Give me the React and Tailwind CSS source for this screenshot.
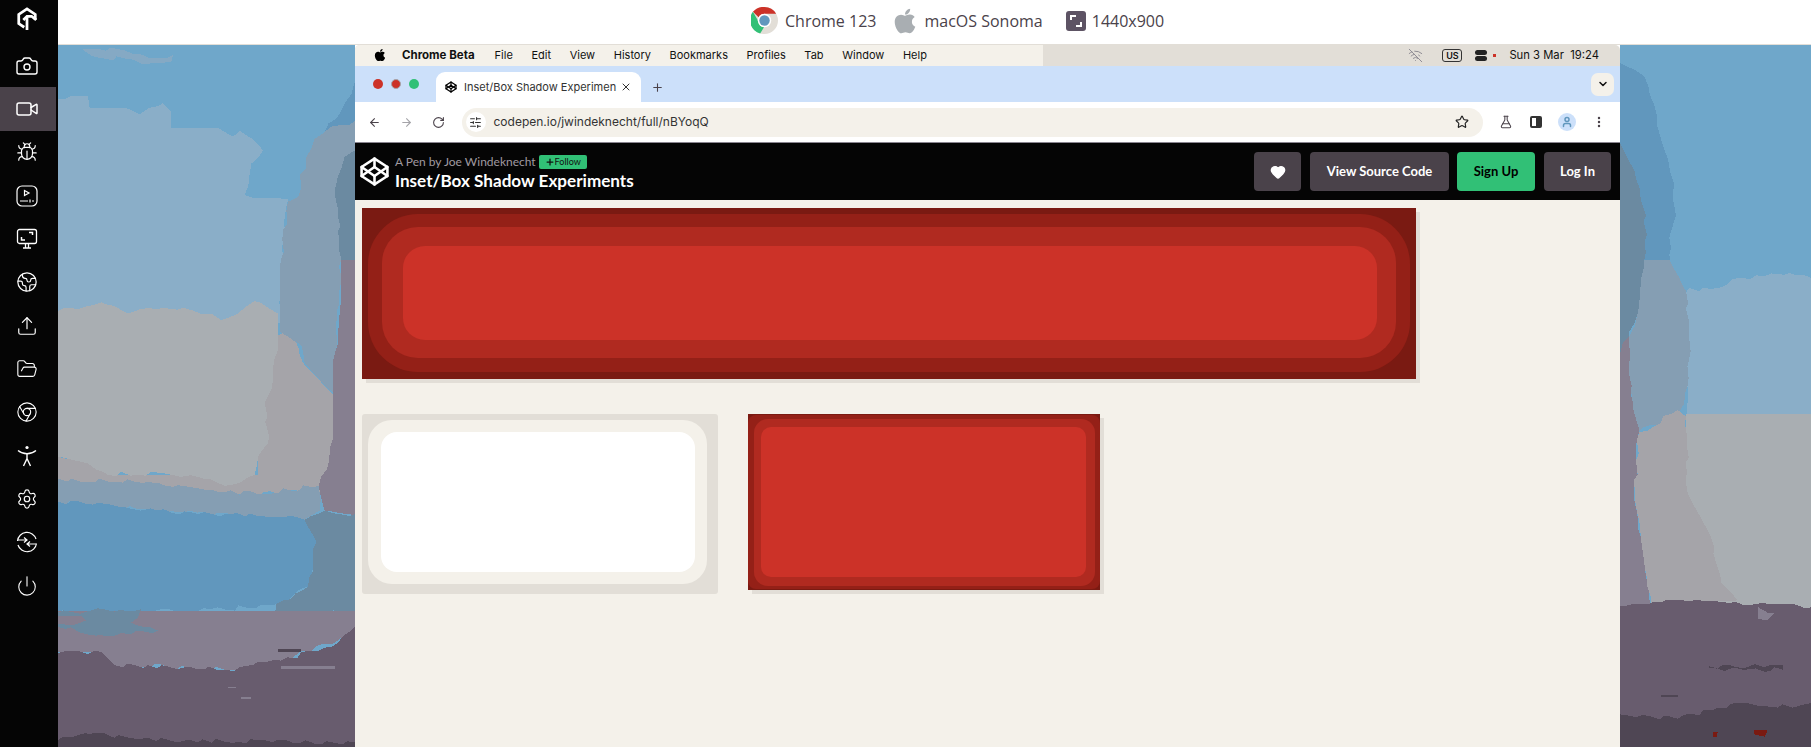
import React from 'react';
import {
  Camera, Video, Bug, Earth, Upload, FolderOpen, Chrome, Settings, Power,
  Codepen, ArrowLeft, ArrowRight, RotateCw, Star, FlaskConical, User, EllipsisVertical,
  ChevronDown, Plus, X, Heart, WifiOff, SlidersHorizontal,
} from 'lucide-react';
import { FaApple } from 'react-icons/fa';

// wallpaper shapes, coordinates are in the panel's own viewBox
const LEFT_WALLPAPER = [
  ['#6fa7ca', '0,0 891,0 891,1568 0,1568'],
  ['#85a9c4', '70,8 120,8 200,12 275,30 345,22 340,38 270,42 200,30 120,28 100,24'],
  ['#8aaec8', '0,120 90,115 95,140 200,140 245,155 275,140 315,130 340,150 340,185 480,185 525,205 545,192 585,210 615,235 580,265 560,335 690,345 680,420 665,620 0,620'],
  ['#6197bd', '891,80 860,130 800,195 891,180'],
  ['#a5a4a9', '600,660 700,635 735,710 825,780 825,940 800,995 500,1005 150,985 0,975 0,920 90,930 150,960 600,960'],
  ['#a9aeb2', '0,595 60,590 130,575 210,600 300,590 400,592 450,600 490,615 540,600 590,572 660,600 660,640 650,700 640,770 620,800 630,890 600,920 590,960 500,985 420,965 300,955 150,960 90,935 0,920'],
  ['#859eb3', '770,210 800,195 891,170 891,480 850,480 830,780 800,760 740,710 730,670 665,640 665,500 690,350 720,340 745,250'],
  ['#6b8aa1', '891,235 860,250 832,320 850,480 891,480'],
  ['#867f90', '850,480 891,480 891,1050 800,1040 782,985 805,950 825,880 825,705 840,640 850,570'],
  ['#859eb3', '0,968 150,975 300,978 420,990 600,1003 782,985 785,1040 740,1060 600,1055 300,1040 0,1022'],
  ['#6197bd', '0,1020 120,1022 300,1040 600,1052 740,1060 780,1110 750,1210 650,1250 400,1265 0,1268'],
  ['#6b8aa1', '740,1060 800,1040 891,1048 891,1265 650,1275 655,1248 750,1210 775,1110'],
  ['#867f90', '0,1265 891,1265 891,1310 840,1330 670,1375 500,1395 170,1385 130,1355 0,1355'],
  ['#6b8aa1', '0,1268 250,1260 220,1290 300,1308 150,1320 0,1300'],
  ['#867f90', '0,1275 70,1275 85,1285 50,1295 0,1292'],
  ['#685c6e', '0,1358 130,1355 170,1385 500,1395 670,1375 840,1335 891,1300 891,1568 0,1568'],
  ['#867f90', '510,1433 535,1433 535,1437 510,1437'],
  ['#867f90', '550,1456 580,1456 580,1460 550,1460'],
  ['#867f90', '670,1388 830,1388 830,1394 670,1394'],
  ['#4f4654', '660,1350 730,1350 730,1355 660,1355'],
  ['#4f4654', '0,1552 100,1538 250,1550 500,1556 891,1558 891,1568 0,1568'],
];

const RIGHT_WALLPAPER = [
  ['#6fa7ca', '27,0 600,0 600,1568 27,1568'],
  ['#6197bd', '27,40 100,70 130,135 150,210 190,310 195,380 175,430 180,510 200,552 100,520 27,520'],
  ['#6b8aa1', '27,220 70,280 105,380 100,480 100,540 80,600 55,640 55,720 27,720'],
  ['#8aaec8', '200,550 300,545 390,520 480,510 600,520 600,835 230,830 225,650'],
  ['#859eb3', '100,480 175,480 225,550 235,700 220,800 200,825 80,865 55,760 55,650 80,600'],
  ['#867f90', '27,690 55,650 60,780 85,860 70,1000 95,1130 120,1255 27,1255'],
  ['#a9aeb2', '225,825 400,825 600,825 600,1265 380,1250 225,1250'],
  ['#a5a4a9', '85,865 200,815 225,830 230,1000 300,1100 330,1200 380,1240 120,1250 95,1130 72,1000'],
  ['#685c6e', '27,1252 150,1245 250,1240 600,1256 600,1568 27,1568'],
  ['#867f90', '440,1255 490,1270 470,1285 440,1282'],
  ['#4f4654', '295,1388 515,1385 515,1395 295,1392'],
  ['#4f4654', '150,1452 200,1452 200,1456 150,1456'],
  ['#4f4654', '27,1495 120,1500 200,1505 320,1480 410,1470 500,1480 600,1470 600,1568 27,1568'],
  ['#7a1a12', '430,1530 470,1530 462,1545 430,1540'],
  ['#7a1a12', '305,1535 320,1535 318,1545 305,1545'],
];

// adds a brush-like jag to the slanted edges of a shape, straight ones are panel borders
function roughen(points, seed) {
  const pts = points.split(' ').map((p) => p.split(',').map(Number));
  const out = [];
  pts.forEach(([x, y], i) => {
    const [nx, ny] = pts[(i + 1) % pts.length];
    const straight = x === nx || y === ny;
    const steps = straight ? 1 : Math.max(1, Math.floor(Math.hypot(nx - x, ny - y) / 20));
    for (let s = 0; s < steps; s++) {
      const t = s / steps;
      const r = Math.sin((i + 1) * 12.9 + s * 78.2 + seed) * 43758.5;
      const jag = (r - Math.floor(r) - 0.5) * 12;
      out.push(`${x + (nx - x) * t + (s ? jag : 0)},${y + (ny - y) * t + (s ? jag : 0)}`);
    }
  });
  return out.join(' ');
}

function Wallpaper({ shapes, viewBox, width }) {
  return (
    <svg viewBox={viewBox} preserveAspectRatio="none" shapeRendering="crispEdges" className="h-full shrink-0" width={width}>
      {shapes.map(([fill, points], i) => (
        <polygon key={i} fill={fill} points={i === 0 ? points : roughen(points, i)} />
      ))}
    </svg>
  );
}

const LogoIcon = () => (
  <svg width="22" height="24" viewBox="0 0 24 26" fill="none" stroke="white" strokeWidth="3">
    <path d="M9 22 3 18V8l9-6 9 6v6" />
    <path d="M12 25V11" />
    <path d="M8 14l4-4h5l5 4" />
  </svg>
);

const PlaySquareIcon = () => (
  <svg width="22" height="22" viewBox="0 0 22 22" fill="none" stroke="white" strokeWidth="1.2">
    <rect x="1" y="1" width="20" height="20" rx="5" />
    <path d="M8.5 5.5v5l4.5-2.5z" />
    <path d="M4 16h8M14 14.5v3M16 16h2" />
  </svg>
);

const MonitorIcon = () => (
  <svg width="22" height="22" viewBox="0 0 22 22" fill="none" stroke="white" strokeWidth="1.3">
    <rect x="1.5" y="1.5" width="19" height="14" rx="2" />
    <path d="M7 20h8M9.5 16v4M12.5 16v4" />
    <path d="M13 4.5h3.5V7M5.5 9v3h3.5" strokeWidth="1.5" />
  </svg>
);

const PersonIcon = () => (
  <svg width="22" height="22" viewBox="0 0 22 22" fill="none" stroke="white" strokeWidth="1.4">
    <circle cx="11" cy="2.5" r="1.6" fill="white" stroke="none" />
    <path d="M2 5.5c3 2.5 5.5 3.2 9 3.2s6-.7 9-3.2" />
    <path d="M11 8.5v5L7.5 21M11 13.5l3.5 7.5" />
  </svg>
);

const SwitchIcon = () => (
  <svg width="22" height="22" viewBox="0 0 22 22" fill="none" stroke="white" strokeWidth="1.2">
    <path d="M1.5 10A9.5 9.5 0 0 1 20 8" />
    <path d="M20.5 12.5A9.5 9.5 0 0 1 2 14" />
    <path d="M2 9h9M8 6.5 11 9l-3 2.5" />
    <path d="M20 13h-9M14 10.5 11 13l3 2.5" />
  </svg>
);

const SIDEBAR_ITEMS = [
  { icon: <Camera size={24} color="white" strokeWidth={1.4} /> },
  { icon: <Video size={24} color="white" strokeWidth={1.5} />, active: true },
  { icon: <Bug size={22} color="white" strokeWidth={1.3} /> },
  { icon: <PlaySquareIcon /> },
  { icon: <MonitorIcon /> },
  { icon: <Earth size={22} color="white" strokeWidth={1.3} /> },
  { icon: <Upload size={22} color="white" strokeWidth={1.3} /> },
  { icon: <FolderOpen size={22} color="white" strokeWidth={1.2} /> },
  { icon: <Chrome size={22} color="white" strokeWidth={1.2} /> },
  { icon: <PersonIcon /> },
  { icon: <Settings size={22} color="white" strokeWidth={1.3} /> },
  { icon: <SwitchIcon /> },
  { icon: <Power size={22} color="white" strokeWidth={1.2} /> },
];

const MENU_ITEMS = ['File', 'Edit', 'View', 'History', 'Bookmarks', 'Profiles', 'Tab', 'Window', 'Help'];

function Sidebar() {
  return (
    <div className="w-[58px] shrink-0 h-full bg-[#050505] flex flex-col">
      <div className="h-[44px] w-[56px] flex items-center justify-center pb-[6px] pr-[2px]">
        <LogoIcon />
      </div>
      {SIDEBAR_ITEMS.map((item, i) => (
        <div key={i} className={`h-[43.35px] w-[56px] shrink-0 flex items-center justify-center pr-[2px] ${item.active ? 'bg-[#4a424a]' : ''}`}>
          {item.icon}
        </div>
      ))}
    </div>
  );
}

const ChromeLogo = () => (
  <svg width="27" height="27" viewBox="0 0 28 28">
    <circle cx="14" cy="14" r="14" fill="#e2ded7" />
    <path d="M14 0a14 14 0 0 1 12.1 7H14a7 7 0 0 0-6.1 3.5L2 5A14 14 0 0 1 14 0z" fill="#cc3228" />
    <path d="M2 5l5.9 10.2a7 7 0 0 0 5.6 5.8L9.5 27.4A14 14 0 0 1 2 5z" fill="#31c076" />
    <circle cx="14" cy="14" r="7" fill="white" />
    <circle cx="14" cy="14" r="5.4" fill="#6197bd" />
  </svg>
);

const ResolutionIcon = () => (
  <svg width="20" height="20" viewBox="0 0 20 20">
    <rect width="20" height="20" rx="3" fill="#5d5364" />
    <path d="M5 9V5h5M15 11v4h-5" fill="none" stroke="white" strokeWidth="2" />
  </svg>
);

function TopBar() {
  return (
    <div className="h-[45px] shrink-0 bg-white border-b border-[#e2ded7] flex items-center pl-[693px] pb-[3px] text-[16px] text-[#4a424a] font-['Open_Sans',sans-serif]">
      <ChromeLogo />
      <span className="ml-[7px]">Chrome 123</span>
      <FaApple size={28} className="ml-[15px] text-[#a9aeb2]" />
      <span className="ml-[5px]">macOS Sonoma</span>
      <div className="ml-[23px]"><ResolutionIcon /></div>
      <span className="ml-[6px]">1440x900</span>
    </div>
  );
}

function MenuBar() {
  return (
    <div className="h-[21px] shrink-0 bg-[#e2ded7] flex items-center text-[11px] text-[#111] font-['Inter',sans-serif] rounded-t-[5px] overflow-hidden">
      <div className="w-[688px] h-full bg-[#f4f1ea] flex items-center pl-[18px]">
        <FaApple size={14} className="text-black mb-[1px]" />
        <span className="ml-[15px] mr-[20px] text-[11.5px] font-bold">Chrome Beta</span>
        <div className="flex gap-[18.6px]">
          {MENU_ITEMS.map((m) => <span key={m}>{m}</span>)}
        </div>
      </div>
      <div className="flex-1 flex items-center justify-end pr-[21px]">
        <WifiOff size={15} className="text-[#8b8890]" strokeWidth={1.5} />
        <span className="ml-[19px] w-[20px] h-[13px] border border-[#333] rounded-[3px] text-[9px] font-semibold flex items-center justify-center">US</span>
        <div className="ml-[13px] w-[12px] h-[12px] flex flex-col gap-[1px]">
          <div className="h-[5px] rounded-full bg-[#222]" />
          <div className="h-[5px] rounded-full bg-[#222]" />
        </div>
        <div className="ml-[6px] w-[3px] h-[3px] bg-[#cc3228]" />
        <span className="ml-[13px] text-[11.25px] whitespace-pre">Sun 3 Mar  19:24</span>
      </div>
    </div>
  );
}

function TabBar() {
  return (
    <div className="h-[36px] shrink-0 bg-[#cce0fa] flex items-end pl-[18px] pr-[6px]">
      <div className="h-full flex items-center gap-[8px]">
        <div className="w-[10px] h-[10px] rounded-full bg-[#cc3228]" />
        <div className="w-[10px] h-[10px] rounded-full bg-[#cc3228] border border-[#a5a4a9]" />
        <div className="w-[10px] h-[10px] rounded-full bg-[#31c076]" />
      </div>
      <div className="ml-[17px] w-[205px] h-[30px] bg-white rounded-t-[9px] flex items-center pl-[9px] text-[11px] text-[#333] font-['Inter',sans-serif]">
        <Codepen size={12} strokeWidth={2.5} className="text-black shrink-0" />
        <span className="ml-[7px] w-[150px] whitespace-nowrap">Inset/Box Shadow Experimen</span>
        <X size={12} strokeWidth={2} className="ml-[6px] text-[#333] shrink-0" />
      </div>
      <div className="ml-[10px] h-[30px] flex items-center">
        <Plus size={13} strokeWidth={2} className="text-[#4a424a]" />
      </div>
      <div className="ml-auto self-center w-[23px] h-[23px] rounded-[7px] bg-[#f4f1ea] flex items-center justify-center">
        <ChevronDown size={12} strokeWidth={3} className="text-[#111]" />
      </div>
    </div>
  );
}

function ToolBar() {
  return (
    <div className="h-[41px] shrink-0 bg-white border-b border-[#8a8590] flex items-center pl-[13px] text-[#4a424a]">
      <ArrowLeft size={13} strokeWidth={2} />
      <ArrowRight size={13} strokeWidth={2} className="ml-[18.5px] text-[#a5a4a9]" />
      <RotateCw size={13} strokeWidth={2} className="ml-[19px]" />
      <div className="ml-[17px] w-[1021.5px] h-[29px] rounded-full bg-[#f4f1ea] flex items-center pl-[4px] pr-[14px]">
        <div className="w-[20px] h-[20px] rounded-full bg-white flex items-center justify-center">
          <SlidersHorizontal size={13} strokeWidth={2} className="text-[#333]" />
        </div>
        <span className="ml-[8px] text-[12px] text-[#333] font-['Inter',sans-serif]">codepen.io/jwindeknecht/full/nBYoqQ</span>
        <Star size={14} strokeWidth={2} className="ml-auto text-[#222]" />
      </div>
      <FlaskConical size={14} strokeWidth={1.8} className="ml-[16px]" />
      <div className="ml-[17px] w-[12px] h-[12px] border-2 border-[#333] rounded-[2px] flex justify-end">
        <div className="w-[4px] h-full bg-[#333]" />
      </div>
      <div className="ml-[16px] w-[18px] h-[18px] rounded-full bg-[#cce0fa] flex items-center justify-center">
        <User size={12} strokeWidth={3} className="text-[#6197bd]" />
      </div>
      <EllipsisVertical size={14} strokeWidth={2.2} className="ml-[16px]" />
    </div>
  );
}

function PenHeader() {
  const btn = "h-[39px] rounded-[4px] flex items-center justify-center text-[13px] font-bold";
  return (
    <div className="h-[57px] shrink-0 bg-[#050505] flex items-center pl-[4px] pr-[9px] font-['Lato',sans-serif]">
      <Codepen size={31} color="white" strokeWidth={2} />
      <div className="ml-[5px] flex flex-col">
        <div className="flex items-center h-[19px]">
          <span className="text-[12px] text-[#a09aa0]">A Pen by Joe Windeknecht</span>
          <span className="ml-[3px] w-[48px] h-[14px] bg-[#31c076] rounded-[2px] flex items-center justify-center text-[9px] text-[#111] whitespace-nowrap">
            <Plus size={10} strokeWidth={3} />Follow
          </span>
        </div>
        <span className="text-[17.1px] font-bold leading-[20px] text-white">Inset/Box Shadow Experiments</span>
      </div>
      <div className={`${btn} ml-auto w-[47px] bg-[#4a424a]`}>
        <Heart size={16} fill="white" color="white" />
      </div>
      <div className={`${btn} ml-[9px] w-[139px] bg-[#4a424a] text-white`}>View Source Code</div>
      <div className={`${btn} ml-[8px] w-[78px] bg-[#31c076] text-black`}>Sign Up</div>
      <div className={`${btn} ml-[9px] w-[67px] bg-[#4a424a] text-white`}>Log In</div>
    </div>
  );
}

function PenContent() {
  return (
    <div className="flex-1 bg-[#f4f1ea] pt-[8px] pl-[7px]">
      {/* wide red box */}
      <div className="w-[1054px] h-[171px] bg-[#7a1a12] pt-[6px] pb-[7px] px-[6px] shadow-[4px_4px_0_#e2ded7]">
        <div className="h-full bg-[#942017] rounded-[50px] pt-[13px] pb-[14px] px-[14px]">
          <div className="h-full bg-[#b02a20] rounded-[36px] pt-[19px] pb-[18px] pl-[21px] pr-[19px]">
            <div className="h-full bg-[#cc3228] rounded-[22px]" />
          </div>
        </div>
      </div>

      <div className="mt-[35px] flex items-start gap-[30px]">
        {/* white box */}
        <div className="w-[356px] h-[180px] bg-[#e2ded7] rounded-[3px] pt-[6px] pb-[10px] pl-[6px] pr-[11px]">
          <div className="h-full bg-[#f4f1ea] rounded-[24px] p-[12px] pl-[13px]">
            <div className="h-full bg-white rounded-[16px]" />
          </div>
        </div>

        {/* small red box */}
        <div className="w-[352px] h-[176px] bg-[#7a1a12] py-px shadow-[4px_4px_0_#e2ded7]">
          <div className="h-full bg-[#942017] rounded-[8px] pt-[4px] pb-[3px] pl-[6px] pr-[5px]">
            <div className="h-full bg-[#b02a20] rounded-[14px] pt-[8px] pb-[9px] pl-[7px] pr-[9px]">
              <div className="h-full bg-[#cc3228] rounded-[10px]" />
            </div>
          </div>
        </div>
      </div>
    </div>
  );
}

export default function App() {
  return (
    <div className="w-[1811px] h-[747px] flex overflow-hidden bg-white">
      <Sidebar />
      <div className="flex-1 flex flex-col min-w-0">
        <TopBar />
        <div className="flex-1 flex min-h-0">
          <Wallpaper shapes={LEFT_WALLPAPER} viewBox="0 0 891 1568" width={297} />
          <div className="w-[1265px] shrink-0 flex flex-col">
            <MenuBar />
            <TabBar />
            <ToolBar />
            <PenHeader />
            <PenContent />
          </div>
          <Wallpaper shapes={RIGHT_WALLPAPER} viewBox="27 0 573 1568" width={191} />
        </div>
      </div>
    </div>
  );
}
